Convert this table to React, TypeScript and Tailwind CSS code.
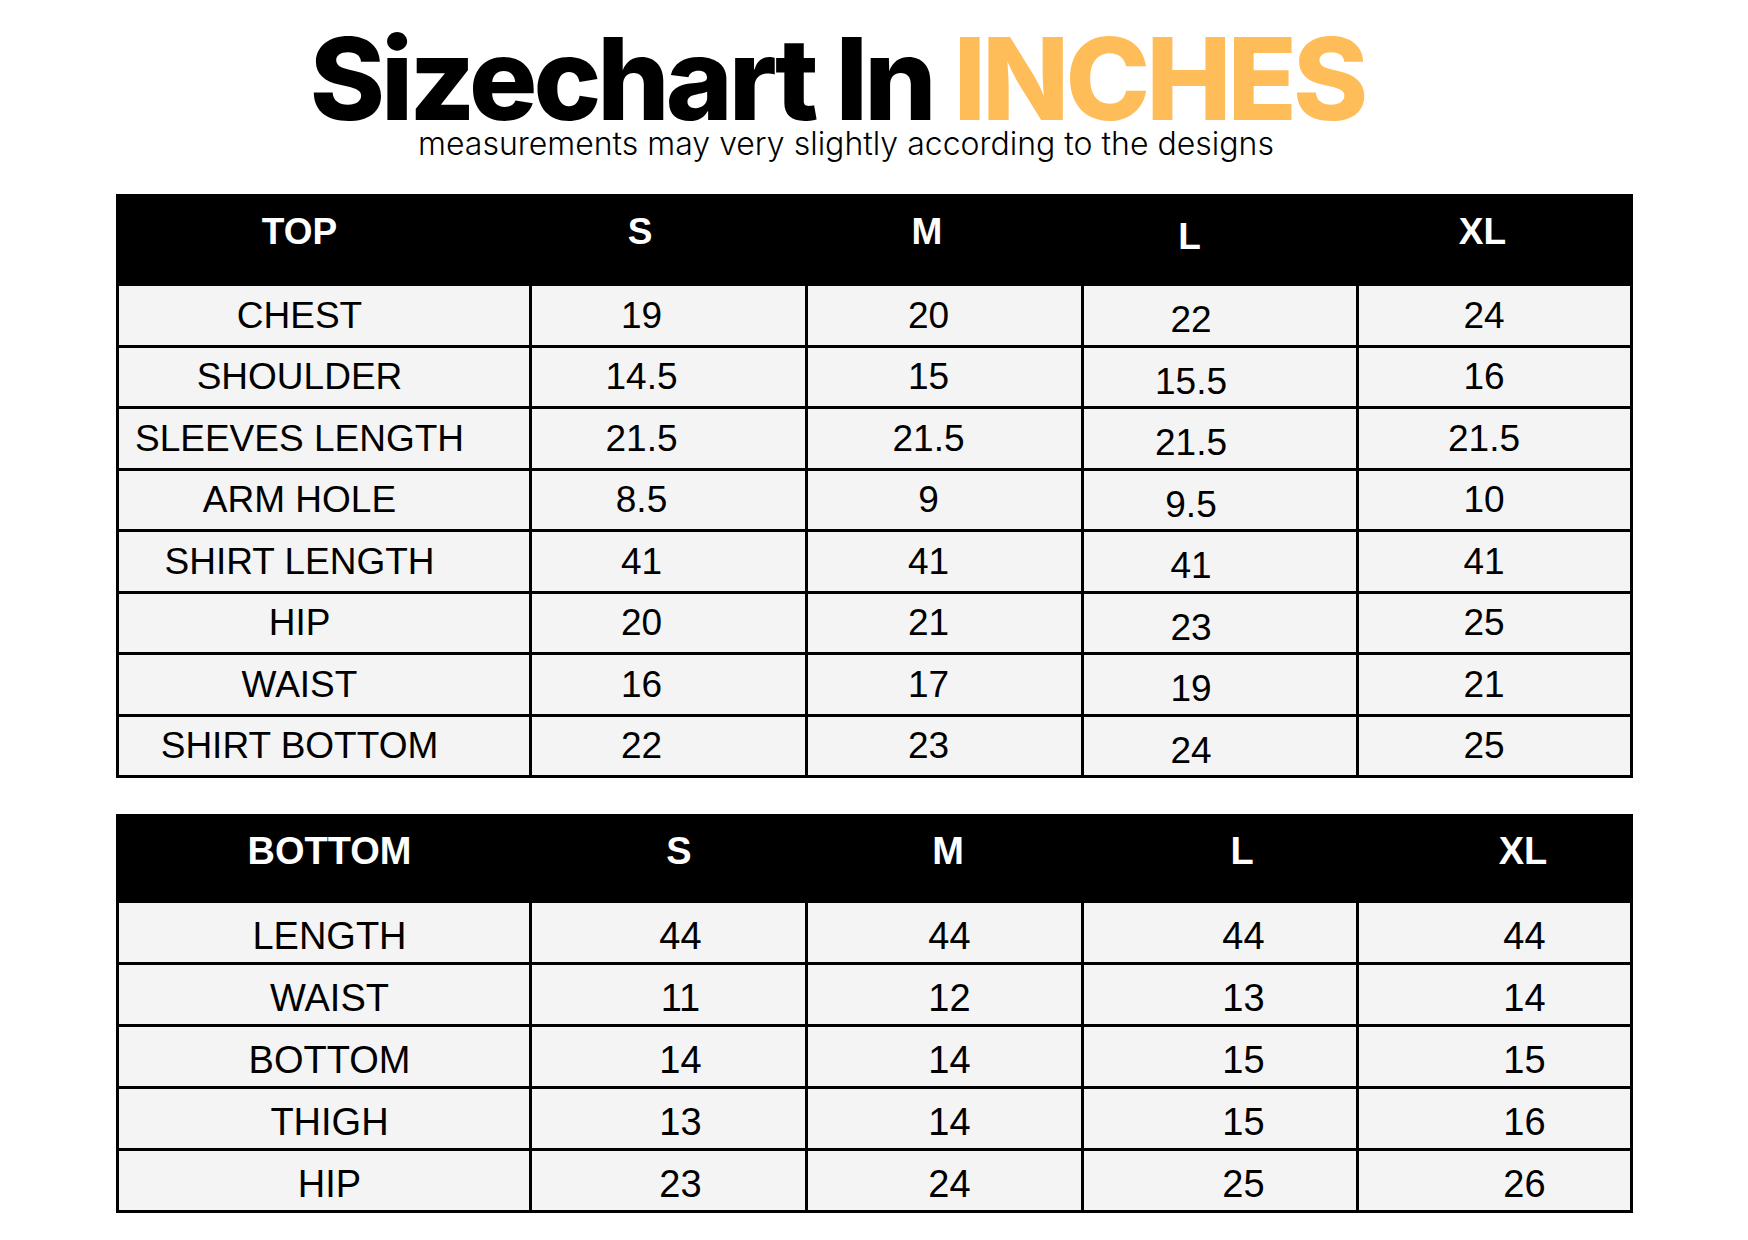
const topRows = [
  ['CHEST', '19', '20', '22', '24'],
  ['SHOULDER', '14.5', '15', '15.5', '16'],
  ['SLEEVES LENGTH', '21.5', '21.5', '21.5', '21.5'],
  ['ARM HOLE', '8.5', '9', '9.5', '10'],
  ['SHIRT LENGTH', '41', '41', '41', '41'],
  ['HIP', '20', '21', '23', '25'],
  ['WAIST', '16', '17', '19', '21'],
  ['SHIRT BOTTOM', '22', '23', '24', '25'],
];

const bottomRows = [
  ['LENGTH', '44', '44', '44', '44'],
  ['WAIST', '11', '12', '13', '14'],
  ['BOTTOM', '14', '14', '15', '15'],
  ['THIGH', '13', '14', '15', '16'],
  ['HIP', '23', '24', '25', '26'],
];

// column widths: label, S, M, L, XL (the size columns carry their own left rule)
const colWidths = ['w-[410px]', 'w-[276px]', 'w-[276px]', 'w-[275px]', 'w-[274px]'];

type ChartProps = {
  title: string;
  rows: string[][];
  headH: string;
  rowH: string;
  // per-column nudges so the text sits where the original chart put it
  shift: string[];
  headShift: string[];
  cellShift: string[];
};

const SizeTable = ({ title, rows, headH, rowH, shift, headShift, cellShift }: ChartProps) => {
  const heads = [title, 'S', 'M', 'L', 'XL'];
  return (
    <div className="mx-auto w-[1517px] border-[3px] border-black bg-[#f4f4f4]">
      <div className={`flex bg-black text-white font-bold ${headH}`}>
        {heads.map((h, i) => (
          <div key={h} className={`flex items-center justify-center ${colWidths[i]} ${shift[i]} ${headShift[i]}`}>
            {h}
          </div>
        ))}
      </div>
      {rows.map((r) => (
        <div key={r[0]} className={`flex border-t-[3px] border-black ${rowH}`}>
          {r.map((c, i) => (
            <div
              key={i}
              className={`flex items-center justify-center ${colWidths[i]} ${i > 0 ? 'border-l-[3px] border-black' : ''} ${shift[i]} ${cellShift[i]}`}
            >
              {c}
            </div>
          ))}
        </div>
      ))}
    </div>
  );
};

export default function App() {
  return (
    <div className="w-[1748px] h-[1240px] bg-white text-black overflow-hidden" style={{ fontFamily: '"Liberation Sans", Arial, sans-serif' }}>
      {/* Heading */}
      <div className="pt-[29px] flex flex-col items-center" style={{ fontFamily: 'Inter, sans-serif' }}>
        <h1 className="mr-[74px] text-[114px] leading-[100px] font-extrabold tracking-[-0.035em]">
          Sizechart In <span className="text-[#ffbd59]">INCHES</span>
        </h1>
        <p className="mt-[1px] mr-[56px] text-[32px] leading-[28px] font-light">
          measurements may very slightly according to the designs
        </p>
      </div>

      <div className="mt-[36px] text-[37px] leading-none">
        <SizeTable
          title="TOP"
          rows={topRows}
          headH="h-[86px]"
          rowH="h-[61.5px]"
          shift={['pr-[48px]', 'pr-[53px]', 'pr-[31px]', 'pr-[57px]', 'pr-[20px]']}
          headShift={['pb-[18px]', 'pb-[18px]', 'pb-[18px]', 'pb-[8px]', 'pb-[18px]']}
          cellShift={['', '', '', 'pt-[9px]', '']}
        />
      </div>

      <div className="mt-[36px] text-[38px] leading-none">
        <SizeTable
          title="BOTTOM"
          rows={bottomRows}
          headH="h-[83px]"
          rowH="h-[62px]"
          shift={['pl-[12px]', 'pl-[25px]', 'pl-[11px]', 'pl-[48px]', 'pl-[61px]']}
          headShift={['pb-[16px]', 'pb-[16px]', 'pb-[16px]', 'pb-[16px]', 'pb-[16px]']}
          cellShift={['pt-[6px]', 'pt-[6px]', 'pt-[6px]', 'pt-[6px]', 'pt-[6px]']}
        />
      </div>
    </div>
  );
}
